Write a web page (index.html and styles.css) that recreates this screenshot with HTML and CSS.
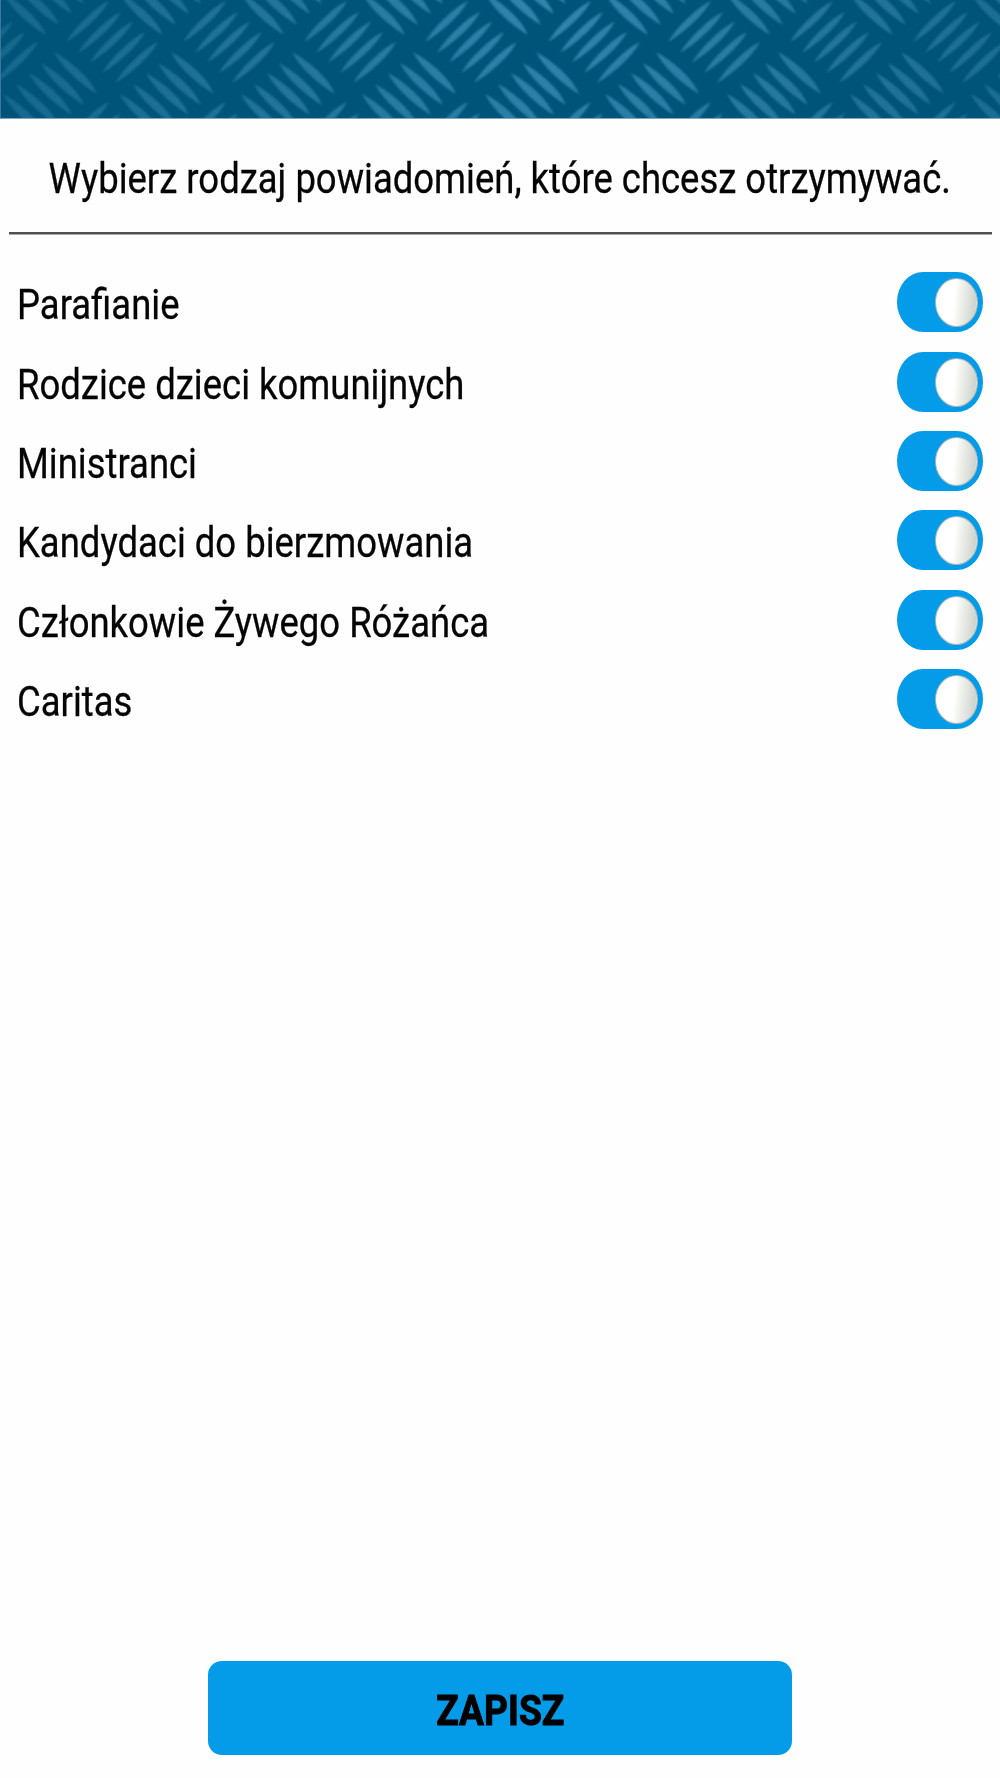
FILE: index.html
```html
<!DOCTYPE html>
<html lang="pl">
<head>
  <meta charset="UTF-8"/>
  <meta name="viewport" content="width=device-width,initial-scale=1"/>
  <title>Powiadomienia</title>
  <link rel="stylesheet" href="styles.css">
</head>
<body>
  <header>
    <svg class="plate" viewBox="0 0 1000 118" aria-hidden="true">
      <defs>
        <radialGradient id="shine" gradientUnits="userSpaceOnUse" cx="560" cy="0" r="560">
          <stop offset="0" stop-color="#3286ae"/>
          <stop offset=".5" stop-color="#23759b"/>
          <stop offset="1" stop-color="#17688d"/>
        </radialGradient>
        <filter id="soft"><feGaussianBlur stdDeviation="1.1"/></filter>
        <path id="up" d="M0 42Q8 29 20 18Q32 6 43 1Q37 12 25 23Q12 35 0 42Z"/>
        <path id="down" d="M0 0Q13 7 25 18Q38 30 43 42Q31 35 19 24Q6 12 0 0Z"/>
        <g id="ribs">
          <use href="#up"/>
          <use href="#up" x="12" y="11"/>
          <use href="#up" x="24" y="20.5"/>
          <use href="#up" x="36" y="31"/>
          <use href="#up" x="49" y="41"/>
          <use href="#down" x="-12" y="52"/>
          <use href="#down" x="-25" y="63"/>
          <use href="#down" x="-37" y="73"/>
          <use href="#down" x="-50" y="84"/>
          <use href="#down" x="-63" y="94"/>
        </g>
        <g id="column">
          <use href="#ribs" y="-101"/>
          <use href="#ribs"/>
          <use href="#ribs" y="101"/>
        </g>
        <mask id="ribMask" maskUnits="userSpaceOnUse" x="0" y="0" width="1000" height="118">
          <g fill="#fff" filter="url(#soft)">
            <use href="#column" x="-54"/>
            <use href="#column" x="66"/>
            <use href="#column" x="183"/>
            <use href="#column" x="304"/>
            <use href="#column" x="425"/>
            <use href="#column" x="548"/>
            <use href="#column" x="668"/>
            <use href="#column" x="790"/>
            <use href="#column" x="913"/>
            <use href="#column" x="1034"/>
          </g>
        </mask>
      </defs>
      <rect width="1000" height="118" fill="url(#shine)" mask="url(#ribMask)"/>
    </svg>
  </header>

  <main>
    <p id="instructions"><span class="text">Wybierz rodzaj powiadomień, które chcesz otrzymywać.</span></p>

    <ul id="groupList">
      <li><span class="text">Parafianie</span><span class="switch"></span></li>
      <li><span class="text">Rodzice dzieci komunijnych</span><span class="switch"></span></li>
      <li><span class="text">Ministranci</span><span class="switch"></span></li>
      <li><span class="text">Kandydaci do bierzmowania</span><span class="switch"></span></li>
      <li><span class="text">Członkowie Żywego Różańca</span><span class="switch"></span></li>
      <li><span class="text">Caritas</span><span class="switch"></span></li>
    </ul>

    <button id="saveBtn"><span class="text">ZAPISZ</span></button>
  </main>
</body>
</html>
```
FILE: styles.css
```css
:root {
  --primary: #049be8;
  --plate: #005379;
  --text: #050505;
  --line: #505050;
}

* {
  box-sizing: border-box;
  margin: 0;
  padding: 0;
}

body {
  font-family: Roboto, sans-serif;
  font-size: 42px;
  line-height: 50px;
  display: flex;
  flex-direction: column;
  min-height: 100vh;
  background: #fefefe;
  color: var(--text);
}

header {
  height: 119px;
  background: var(--plate);
  border-bottom: 1px solid #7fa9bf;
  border-left: 1px solid #397a99;
  overflow: hidden;
}

.plate {
  display: block;
  width: 1000px;
  height: 118px;
  margin-left: -1px;
}

main {
  flex: 1;
  display: flex;
  flex-direction: column;
  padding: 0 8.5px 23px;
}

/* condensed lettering */
.text {
  display: inline-block;
  white-space: nowrap;
  transform: scaleX(.868);
  transform-origin: left;
  -webkit-text-stroke: .3px;
}

#instructions {
  display: flex;
  justify-content: center;
  height: 115px;
  padding-top: 35px;
  border-bottom: 2px solid var(--line);
  box-shadow: 0 1px #aaa;
}

#instructions .text,
#saveBtn .text {
  transform-origin: center;
}

#groupList {
  list-style: none;
  padding: 31.5px 8.5px 0;
}

#groupList li {
  display: flex;
  justify-content: space-between;
  align-items: center;
  height: 79.35px;
}

.switch {
  display: flex;
  justify-content: flex-end;
  width: 86px;
  height: 60px;
  padding: 6px 5px;
  margin-top: -6px;
  border-radius: 26px / 30px;
  background: var(--primary);
}

.switch::after {
  content: "";
  width: 41px;
  height: 47px;
  border-radius: 50%;
  border: 1px solid #a9b8b8;
  background: linear-gradient(95deg, #fff 45%, #f3f5ef 55%, #cfd3d0 92%, #fff);
}

#saveBtn {
  width: 584px;
  height: 94px;
  padding-top: 6px;
  margin: auto auto 0;
  border: none;
  border-radius: 14px;
  background: var(--primary);
  color: #000;
  font: bold 42px/50px Roboto, sans-serif;
  cursor: pointer;
}

#saveBtn .text {
  transform: scaleX(.885);
  -webkit-text-stroke: 1px;
}
```
